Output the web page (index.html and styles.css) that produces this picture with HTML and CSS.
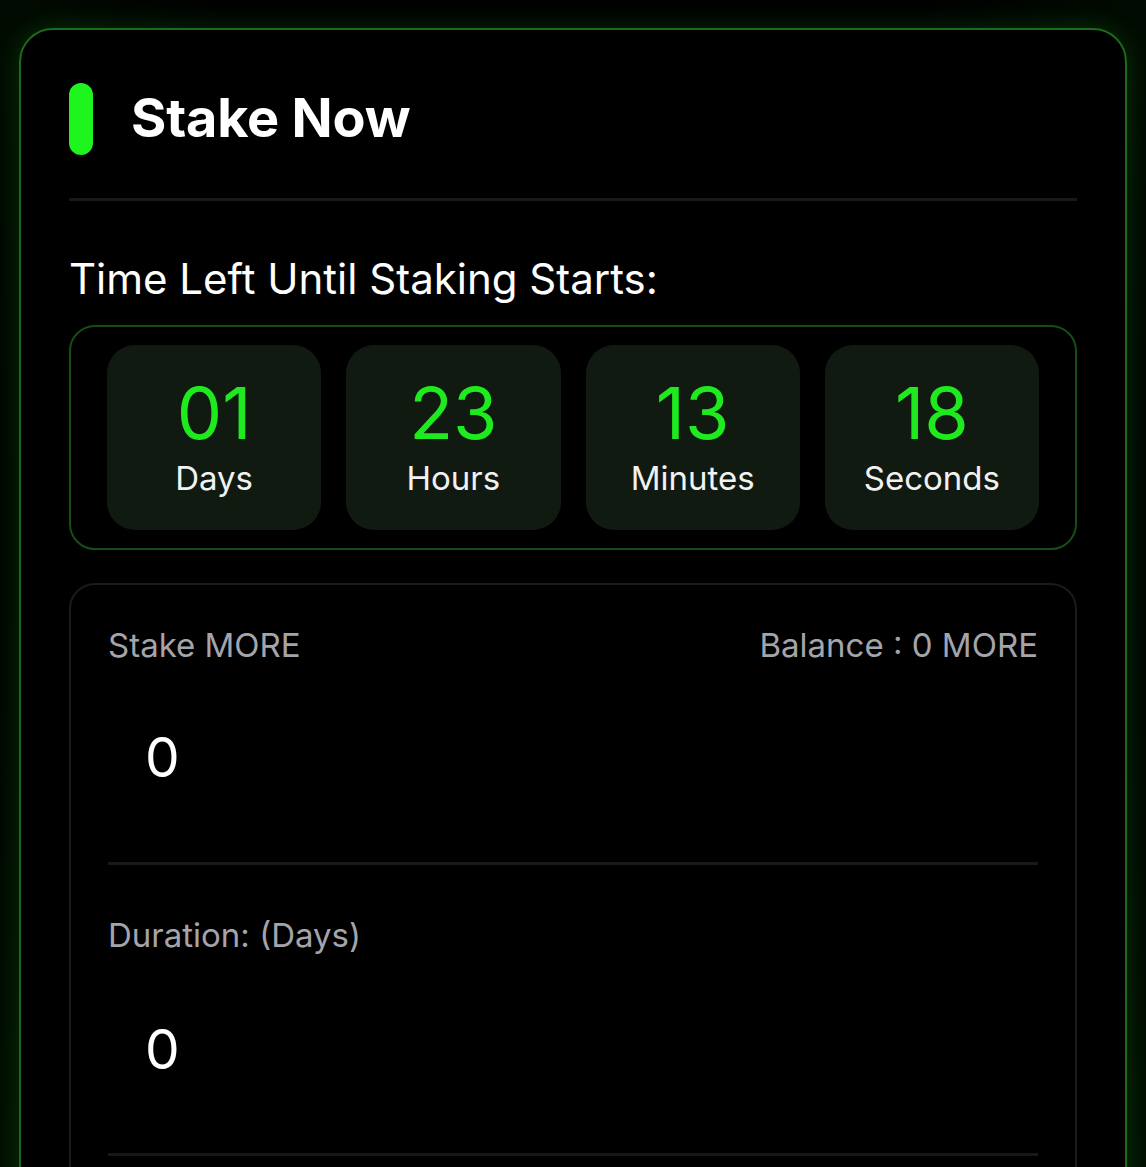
FILE: index.html
```html
<!DOCTYPE html>
<html lang="en">
<head>
<meta charset="utf-8">
<title>Stake Now</title>
<link rel="stylesheet" href="styles.css">
</head>
<body>
<div class="page">
  <section class="card">
    <header class="card-head">
      <span class="pill"></span>
      <h1 class="title">Stake Now</h1>
    </header>
    <div class="rule"></div>
    <p class="lead">Time Left Until Staking Starts:</p>
    <div class="countdown">
      <div class="unit"><span class="num">01</span><span class="lbl">Days</span></div>
      <div class="unit"><span class="num">23</span><span class="lbl">Hours</span></div>
      <div class="unit"><span class="num">13</span><span class="lbl">Minutes</span></div>
      <div class="unit"><span class="num">18</span><span class="lbl">Seconds</span></div>
    </div>
    <div class="form">
      <div class="field">
        <div class="field-top">
          <span class="label">Stake MORE</span>
          <span class="label">Balance : 0 MORE</span>
        </div>
        <div class="value">0</div>
      </div>
      <div class="field">
        <div class="field-top">
          <span class="label">Duration: (Days)</span>
        </div>
        <div class="value">0</div>
      </div>
    </div>
  </section>
</div>
</body>
</html>
```

FILE: styles.css
```css
* { box-sizing: border-box; }
html, body {
  margin: 0;
  padding: 0;
  background: #000;
  height: 100%;
  overflow: hidden;
}
body {
  font-family: Inter, "Noto Sans", sans-serif;
  color: #fff;
}
.page {
  padding: 28px 19px 0 19px;
  background: radial-gradient(ellipse at 50% 40%, #000 60%, #031203 100%);
  min-height: 100%;
}
.card {
  border: 2px solid #1d6a1d;
  border-radius: 34px;
  background: #000;
  padding: 53px 48px 60px 48px;
  box-shadow: 0 0 28px rgba(30, 200, 30, 0.22);
  min-height: 1300px;
}
.card-head {
  display: flex;
  align-items: center;
  gap: 38px;
  height: 72px;
}
.pill {
  width: 24px;
  height: 72px;
  border-radius: 12px;
  background: #1ef51e;
  flex: none;
}
.title {
  margin: -3px 0 0 0;
  font-size: 54px;
  font-weight: 700;
  line-height: 1;
  letter-spacing: -0.2px;
}
.rule {
  height: 3px;
  background: #17171c;
  margin-top: 43px;
}
.lead {
  margin: 53px 0 0 0;
  font-size: 42px;
  line-height: 50px;
  font-weight: 400;
}
.countdown {
  margin-top: 21px;
  border: 2px solid #164d16;
  border-radius: 26px;
  padding: 18px 36px;
  display: grid;
  grid-template-columns: repeat(4, 1fr);
  gap: 25px;
}
.unit {
  background: #111a11;
  border-radius: 28px;
  height: 185px;
  display: flex;
  flex-direction: column;
  align-items: center;
  justify-content: center;
}
.num {
  font-size: 72px;
  line-height: 1;
  color: #1fea1f;
  font-weight: 400;
}
.lbl {
  margin-top: 10px;
  font-size: 33px;
  line-height: 1.2;
  color: #f2f2f2;
}
.form {
  margin-top: 33px;
  border: 2px solid #1a1a1f;
  border-radius: 26px;
  padding: 0 37px;
  min-height: 700px;
}
.field {
  border-bottom: 3px solid #17171c;
  height: 280px;
  padding-top: 41px;
}
.field + .field {
  height: 291px;
  padding-top: 51px;
}
.field-top {
  display: flex;
  justify-content: space-between;
}
.label {
  font-size: 33px;
  line-height: 1.2;
  color: #a4a4ab;
}
.value {
  margin-top: 64px;
  padding-left: 37px;
  font-size: 55px;
  line-height: 1;
  color: #fff;
}
.field + .field .value {
  margin-top: 66px;
}
```
